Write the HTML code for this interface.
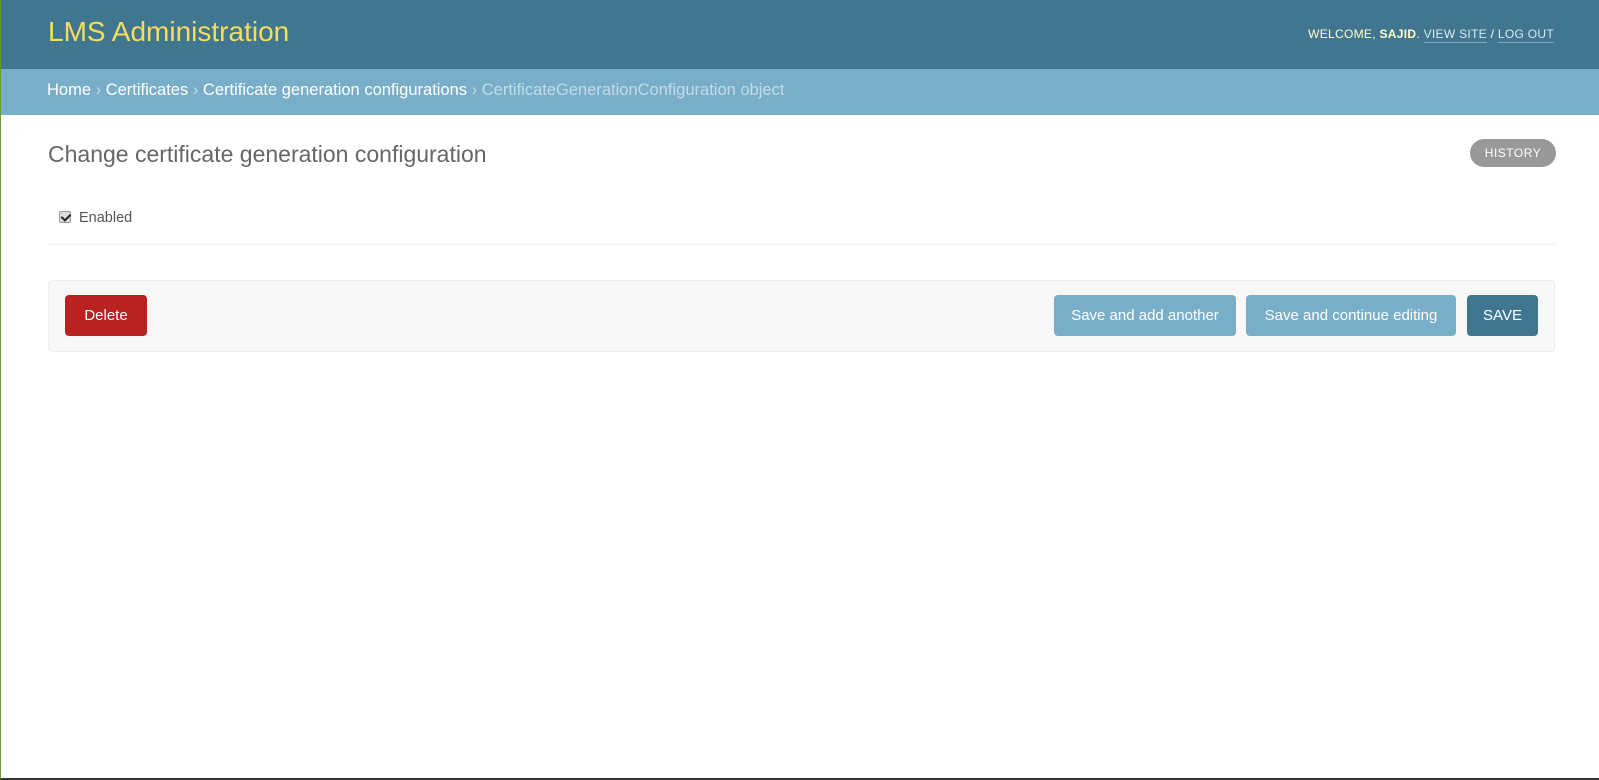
<!DOCTYPE html>
<html><head><style>
*{box-sizing:border-box;margin:0;padding:0}
html,body{width:1599px;height:780px;overflow:hidden;background:#fff;font-family:"Liberation Sans",sans-serif}
body{border-left:1px solid #6a9a3a;border-bottom:2px solid #333;position:relative}
#header{height:69px;background:#417690;position:relative}
#branding{position:absolute;left:47px;top:16px;font-size:28px;color:#f5dd5d;font-weight:300}
#tools{position:absolute;right:45px;top:27px;font-size:12px;color:#ffc;letter-spacing:.3px}
#tools a{color:#d9ecf3;text-decoration:none;border-bottom:1px solid rgba(255,255,255,.35);padding-bottom:1px}
#tools b{color:#ffc}
#bc{height:46px;background:#79aec8;padding:12px 0 0 46px;font-size:16.5px;color:#fff}
#bc span.s{color:#c4dce8}
#bc .last{color:#c4dce8}
h1{position:absolute;left:47px;top:141px;font-size:23px;font-weight:300;color:#666}
.hist{position:absolute;left:1469px;top:139px;width:86px;height:28px;border-radius:14px;background:#999;color:#fff;font-size:12px;text-align:center;line-height:28px;letter-spacing:.5px}
.en{position:absolute;left:58px;top:210px;font-size:14.5px;color:#555}
.cb{display:inline-block;width:12px;height:12px;border:1px solid #999;border-radius:2px;background:#ddd;vertical-align:-1px;margin-right:8px;position:relative}
.cb:after{content:"";position:absolute;left:3px;top:0px;width:4px;height:7px;border:solid #222;border-width:0 2px 2px 0;transform:rotate(45deg)}
.hr{position:absolute;left:47px;top:244px;width:1507px;height:1px;background:#eee}
.row{position:absolute;left:47px;top:280px;width:1507px;height:72px;background:#f8f8f8;border:1px solid #eee;border-radius:4px}
.btn{position:absolute;top:14px;height:41px;border-radius:4px;color:#fff;font-size:15px;text-align:center;line-height:41px}
</style></head><body>
<div id="header"><div id="branding">LMS Administration</div>
<div id="tools">WELCOME, <b>SAJID</b>. <a>VIEW SITE</a> / <a>LOG OUT</a></div></div>
<div id="bc">Home <span class="s">›</span> Certificates <span class="s">›</span> Certificate generation configurations <span class="s">›</span> <span class="last">CertificateGenerationConfiguration object</span></div>
<h1>Change certificate generation configuration</h1>
<div class="hist">HISTORY</div>
<div class="en"><span class="cb"></span>Enabled</div>
<div class="hr"></div>
<div class="row">
<div class="btn" style="left:16px;width:82px;background:#ba2121">Delete</div>
<div class="btn" style="left:1005px;width:182px;background:#79aec8">Save and add another</div>
<div class="btn" style="left:1197px;width:210px;background:#79aec8">Save and continue editing</div>
<div class="btn" style="left:1418px;width:71px;background:#417690">SAVE</div>
</div>
</body></html>
